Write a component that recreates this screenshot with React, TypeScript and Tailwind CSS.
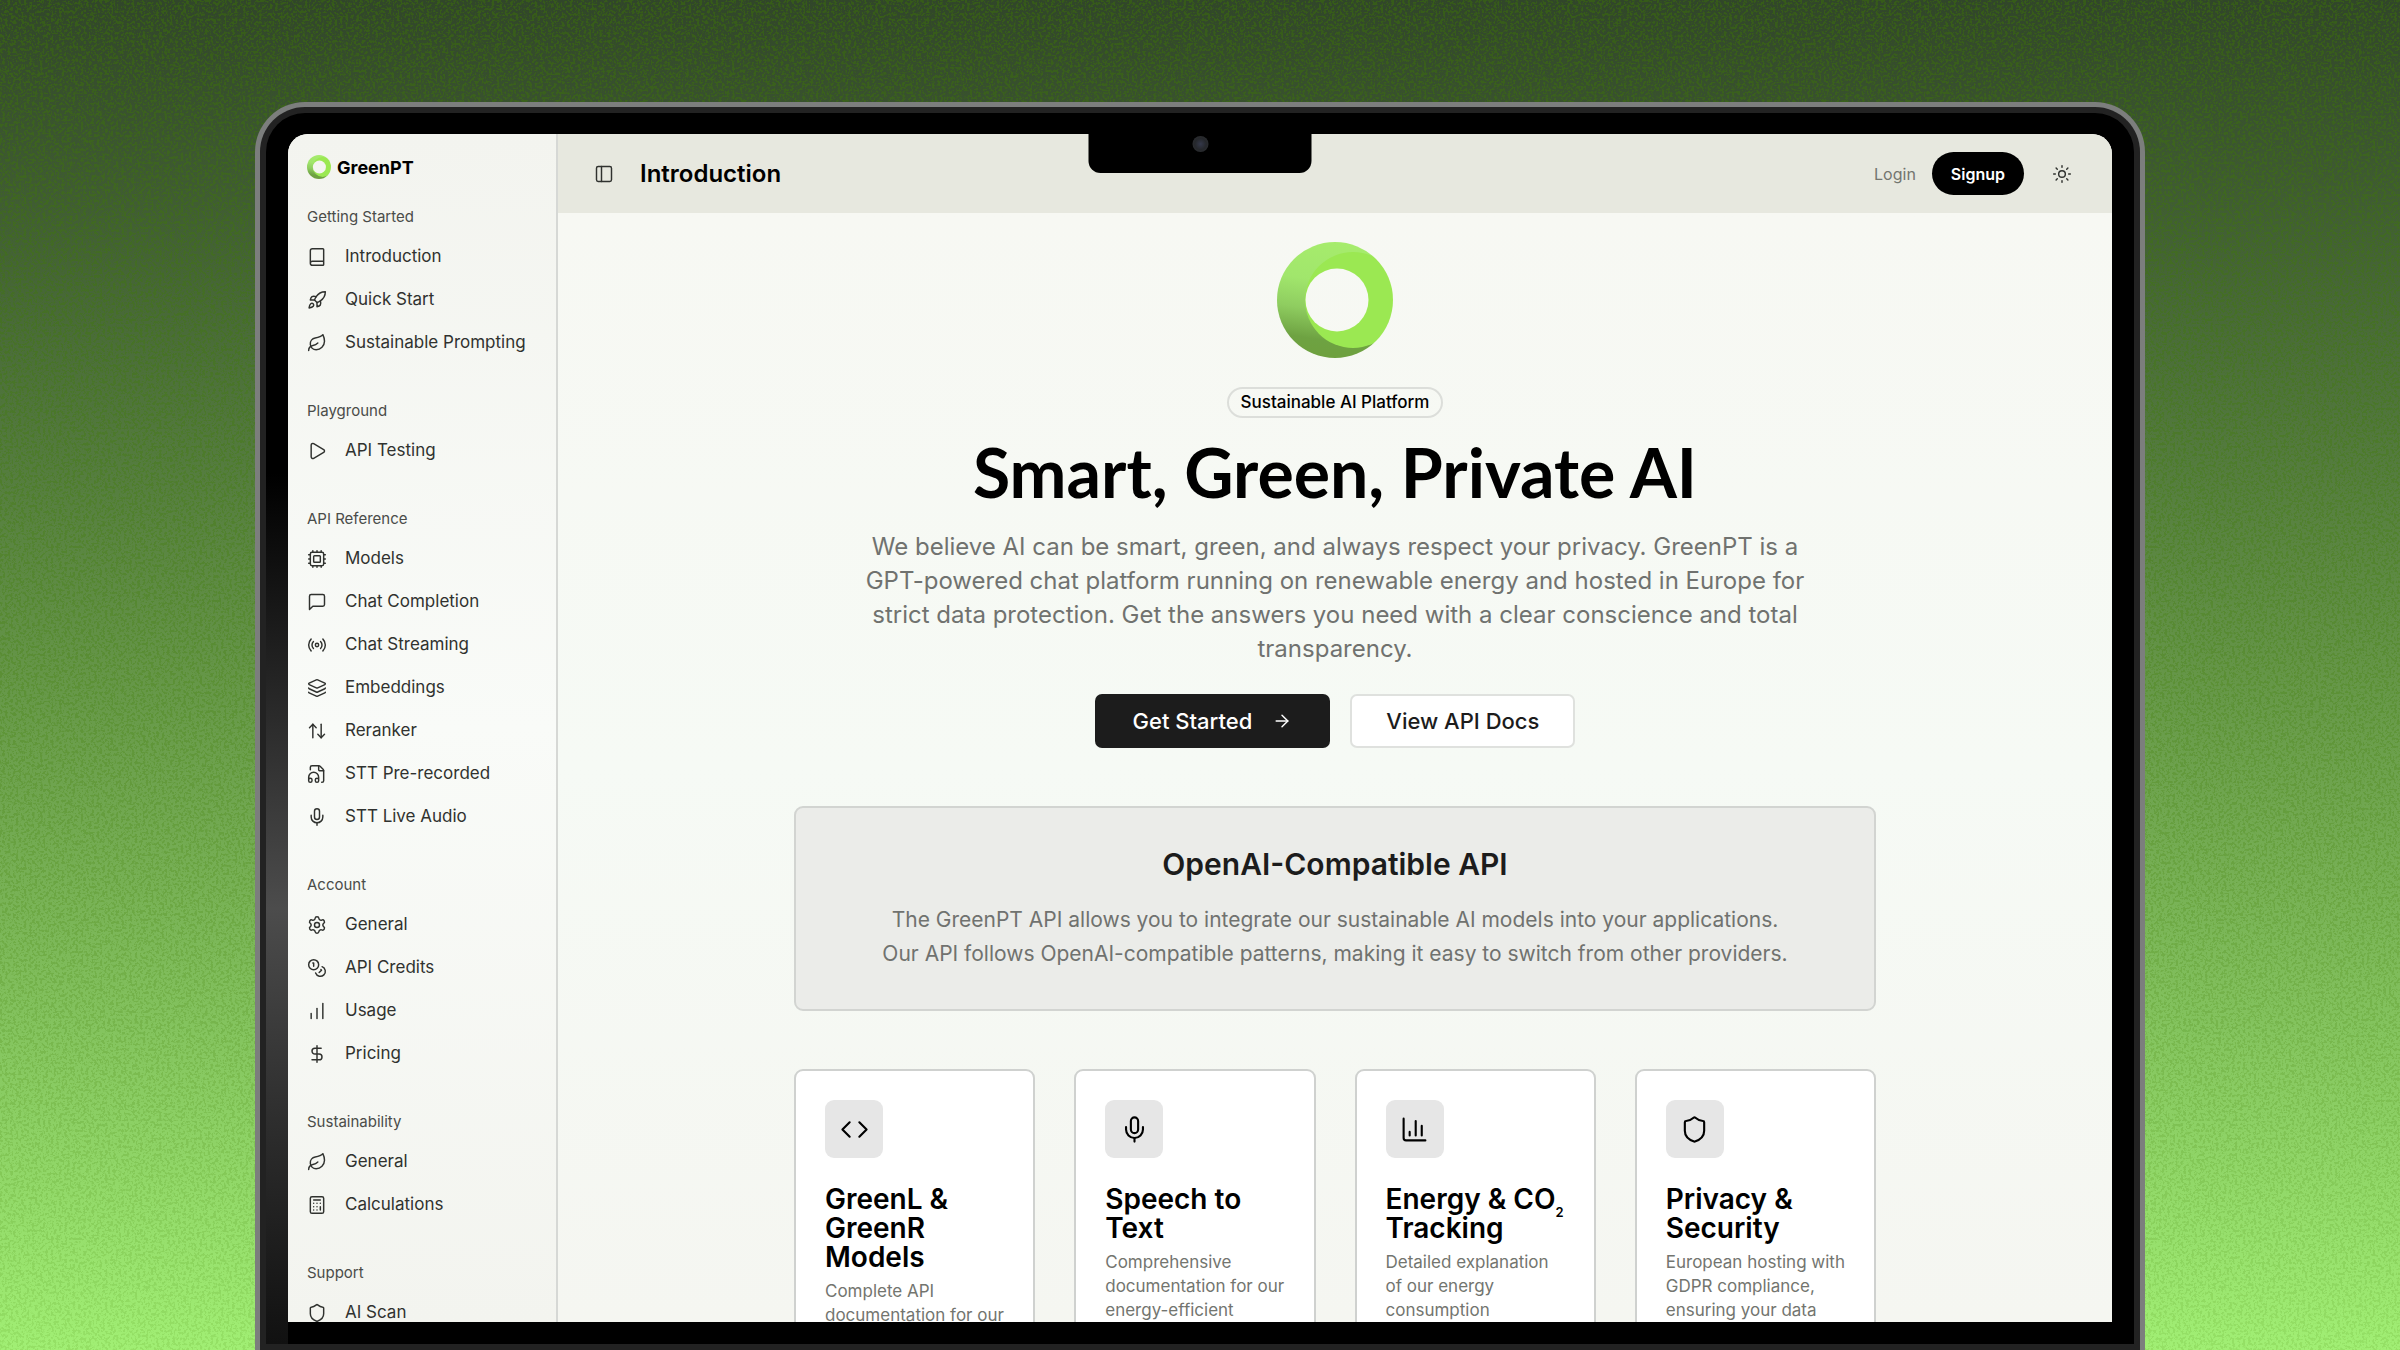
import { useId } from "react";
import type { ComponentType } from "react";
import {
  ArrowRight,
  ArrowUpDown,
  Book,
  Calculator,
  ChartColumn,
  ChartNoAxesColumnIncreasing,
  Code,
  Coins,
  Cpu,
  DollarSign,
  FileHeadphone,
  Layers,
  Leaf,
  Mic,
  PanelLeft,
  Play,
  Radio,
  Rocket,
  Settings,
  Shield,
  Sun,
} from "lucide-react";

type Icon = ComponentType<{ className?: string; strokeWidth?: number | string }>;

const ChatIcon: Icon = ({ className, strokeWidth }) => (
  <svg
    viewBox="0 0 24 24"
    fill="none"
    stroke="currentColor"
    strokeWidth={strokeWidth}
    strokeLinecap="round"
    strokeLinejoin="round"
    className={className}
  >
    <path d="M21 15a2 2 0 0 1-2 2H7l-4 4V5a2 2 0 0 1 2-2h14a2 2 0 0 1 2 2z" />
  </svg>
);

const navSections: { title: string; items: { label: string; icon: Icon }[] }[] = [
  {
    title: "Getting Started",
    items: [
      { label: "Introduction", icon: Book },
      { label: "Quick Start", icon: Rocket },
      { label: "Sustainable Prompting", icon: Leaf },
    ],
  },
  {
    title: "Playground",
    items: [{ label: "API Testing", icon: Play }],
  },
  {
    title: "API Reference",
    items: [
      { label: "Models", icon: Cpu },
      { label: "Chat Completion", icon: ChatIcon },
      { label: "Chat Streaming", icon: Radio },
      { label: "Embeddings", icon: Layers },
      { label: "Reranker", icon: ArrowUpDown },
      { label: "STT Pre-recorded", icon: FileHeadphone },
      { label: "STT Live Audio", icon: Mic },
    ],
  },
  {
    title: "Account",
    items: [
      { label: "General", icon: Settings },
      { label: "API Credits", icon: Coins },
      { label: "Usage", icon: ChartNoAxesColumnIncreasing },
      { label: "Pricing", icon: DollarSign },
    ],
  },
  {
    title: "Sustainability",
    items: [
      { label: "General", icon: Leaf },
      { label: "Calculations", icon: Calculator },
    ],
  },
  {
    title: "Support",
    items: [{ label: "AI Scan", icon: Shield }],
  },
];

const features = [
  {
    icon: Code,
    title: "GreenL & GreenR Models",
    text: "Complete API documentation for our",
  },
  {
    icon: Mic,
    title: "Speech to Text",
    text: "Comprehensive documentation for our energy-efficient",
  },
  {
    icon: ChartColumn,
    title: (
      <>
        Energy & CO<sub className="-bottom-2 text-[13px]">2</sub> Tracking
      </>
    ),
    text: "Detailed explanation of our energy consumption",
  },
  {
    icon: Shield,
    title: "Privacy & Security",
    text: "European hosting with GDPR compliance, ensuring your data",
  },
];

function Logo({ className }: { className?: string }) {
  const id = useId();
  return (
    <svg viewBox="0 0 116 116" className={className} aria-hidden="true">
      <defs>
        <linearGradient id={`${id}-band`} x1="0.55" y1="0" x2="0.4" y2="1">
          <stop offset="0" stopColor="#a6ec6c" />
          <stop offset="0.35" stopColor="#a1e66c" />
          <stop offset="0.6" stopColor="#8fcd60" />
          <stop offset="0.85" stopColor="#6ea242" />
          <stop offset="1" stopColor="#6ea03e" />
        </linearGradient>
        <mask id={`${id}-ring`}>
          <circle cx="58" cy="58" r="58" fill="#fff" />
          <circle cx="60" cy="58" r="31.5" fill="#000" />
        </mask>
      </defs>
      <g mask={`url(#${id}-ring)`}>
        <rect width="116" height="116" fill={`url(#${id}-band)`} />
        <circle cx="76" cy="58" r="48" fill="#9be852" />
      </g>
    </svg>
  );
}

function Grain() {
  return (
    <svg
      className="absolute inset-0 h-full w-full opacity-40 [mask-image:linear-gradient(#000,rgba(0,0,0,0.3))]"
      aria-hidden="true"
    >
      <filter id="grain" x="0" y="0" width="100%" height="100%">
        <feTurbulence type="fractalNoise" baseFrequency="0.37" numOctaves="3" seed="4" />
        <feColorMatrix values="0 0 0 0 0.05  0 0 0 0 0.2  0 0 0 0 0  9 0 0 0 -4.4" />
      </filter>
      <rect width="100%" height="100%" filter="url(#grain)" />
    </svg>
  );
}

function Sidebar() {
  return (
    <aside className="w-[270px] shrink-0 overflow-hidden border-r-2 border-[#d6d8d5] bg-linear-to-b from-[#f3f4ef] via-[#f9fbf8] to-[#f3f4ef] pl-[19px] text-[#30322f]">
      <a href="#" className="mt-[21px] flex h-6 items-center gap-[6px] text-[18px] font-bold text-black">
        <Logo className="size-6" />
        GreenPT
      </a>
      <nav className="mt-6 flex flex-col gap-[33px]">
        {navSections.map((section) => (
          <div key={section.title}>
            <h2 className="flex h-[28px] items-center text-[15px] text-[#4a4c49]">{section.title}</h2>
            <ul className="mt-1">
              {section.items.map((item) => (
                <li key={item.label}>
                  <a href="#" className="flex h-[43px] items-center gap-[18px] text-[17px] whitespace-nowrap">
                    <item.icon className="size-5 shrink-0" strokeWidth={1.75} />
                    {item.label}
                  </a>
                </li>
              ))}
            </ul>
          </div>
        ))}
      </nav>
    </aside>
  );
}

function Header() {
  return (
    <header className="flex h-[79px] shrink-0 items-center bg-[#e7e8df] pr-10 pl-9">
      <button aria-label="Toggle sidebar" className="text-[#30322f]">
        <PanelLeft className="size-5" strokeWidth={1.75} />
      </button>
      <h1 className="ml-[26px] text-[24px] font-semibold text-black">Introduction</h1>
      <div className="ml-auto flex items-center">
        <a href="#" className="text-[16px] text-[#73756f]">
          Login
        </a>
        <button className="ml-4 h-[43px] rounded-full bg-black px-[19px] text-[16px] font-semibold text-white">
          Signup
        </button>
        <button aria-label="Toggle theme" className="ml-7 text-[#30322f]">
          <Sun className="size-5" strokeWidth={1.75} />
        </button>
      </div>
    </header>
  );
}

function Hero() {
  return (
    <section className="flex flex-col items-center text-center">
      <Logo className="size-[116px]" />
      <span className="mt-[29px] flex h-[31px] items-center rounded-full border-2 border-[#dcdeda] px-3 text-[17px] font-medium text-black">
        Sustainable AI Platform
      </span>
      <h2 className="mt-[18px] font-['Lato',sans-serif] text-[68px] leading-[72px] font-bold text-black">
        Smart, Green, Private AI
      </h2>
      <p className="mt-[22px] max-w-[960px] text-[24px] leading-[34px] text-[#70726f]">
        We believe AI can be smart, green, and always respect your privacy. GreenPT is a GPT-powered chat platform
        running on renewable energy and hosted in Europe for strict data protection. Get the answers you need with a
        clear conscience and total transparency.
      </p>
      <div className="mt-7 flex gap-5 text-[22px] font-medium">
        <button className="flex h-[54px] items-center gap-5 rounded-[7px] bg-[#1c1c1c] px-[38px] text-white">
          Get Started
          <ArrowRight className="size-5" strokeWidth={1.75} />
        </button>
        <button className="h-[54px] rounded-[7px] border-2 border-[#dfe1de] bg-white px-[34px] text-[#1c1c1c]">
          View API Docs
        </button>
      </div>
    </section>
  );
}

function FeatureCards() {
  return (
    <section className="mt-[58px] grid grid-cols-4 gap-[39px]">
      {features.map((feature, i) => (
        <article key={i} className="h-[400px] rounded-[9px] border-2 border-[#cfd1cf] bg-white p-[29px]">
          <div className="flex size-[58px] items-center justify-center rounded-[9px] bg-[#e6e6e6] text-black">
            <feature.icon className="size-[29px]" strokeWidth={1.75} />
          </div>
          <h3 className="mt-[27px] text-[28px] leading-[29px] font-semibold text-black">{feature.title}</h3>
          <p className="mt-[7px] text-[17px] leading-6 text-[#73756f]">{feature.text}</p>
        </article>
      ))}
    </section>
  );
}

export default function App() {
  return (
    <div className="relative flex h-screen flex-col overflow-hidden bg-linear-to-b from-[#31462a] via-[#659648] to-[#a1ef74] px-[255px] pt-[102px] font-['Inter',sans-serif]">
      <Grain />

      {/* Laptop lid */}
      <div className="relative flex min-h-0 flex-1 flex-col rounded-t-[50px] border-[5px] border-b-0 border-[#7c7e7d] bg-[#222] p-[6px]">
        <div className="relative flex min-h-0 flex-1 flex-col rounded-t-[39px] bg-black p-[22px] pt-[21px]">
          {/* Reflection on the left bezel */}
          <div className="absolute top-[360px] bottom-0 left-0 w-[22px] bg-linear-to-b from-transparent via-[#4c4c4c] to-[#111]" />

          <div className="flex min-h-0 flex-1 overflow-hidden rounded-t-[20px] bg-[#f7f8f3]">
            <Sidebar />
            <div className="flex min-w-0 flex-1 flex-col">
              <Header />
              <main className="min-h-0 flex-1 overflow-hidden bg-linear-to-b from-[#f7f8f3] via-[#f6faf5] to-[#f5f6f1] px-[38px] pt-[29px]">
                <div className="mx-auto max-w-[1082px]">
                  <Hero />
                  <section className="mt-[58px] rounded-[9px] border-2 border-[#d2d4d1] bg-[#ebece9] px-[38px] pt-9 pb-[38px] text-center">
                    <h3 className="text-[30px] leading-10 font-semibold text-[#1c1c1c]">OpenAI-Compatible API</h3>
                    <p className="mt-[19px] text-[21px] leading-[34px] text-[#70726f]">
                      The GreenPT API allows you to integrate our sustainable AI models into your applications.
                      <br />
                      Our API follows OpenAI-compatible patterns, making it easy to switch from other providers.
                    </p>
                  </section>
                  <FeatureCards />
                </div>
              </main>
            </div>
          </div>

          {/* Camera notch */}
          <div className="absolute top-5 left-1/2 flex h-10 w-[223px] -translate-x-1/2 justify-center rounded-b-[12px] bg-black pt-[3px]">
            <div className="size-4 rounded-full bg-radial from-[#34384a] via-[#25272b] to-[#303234]" />
          </div>
        </div>
      </div>
    </div>
  );
}
